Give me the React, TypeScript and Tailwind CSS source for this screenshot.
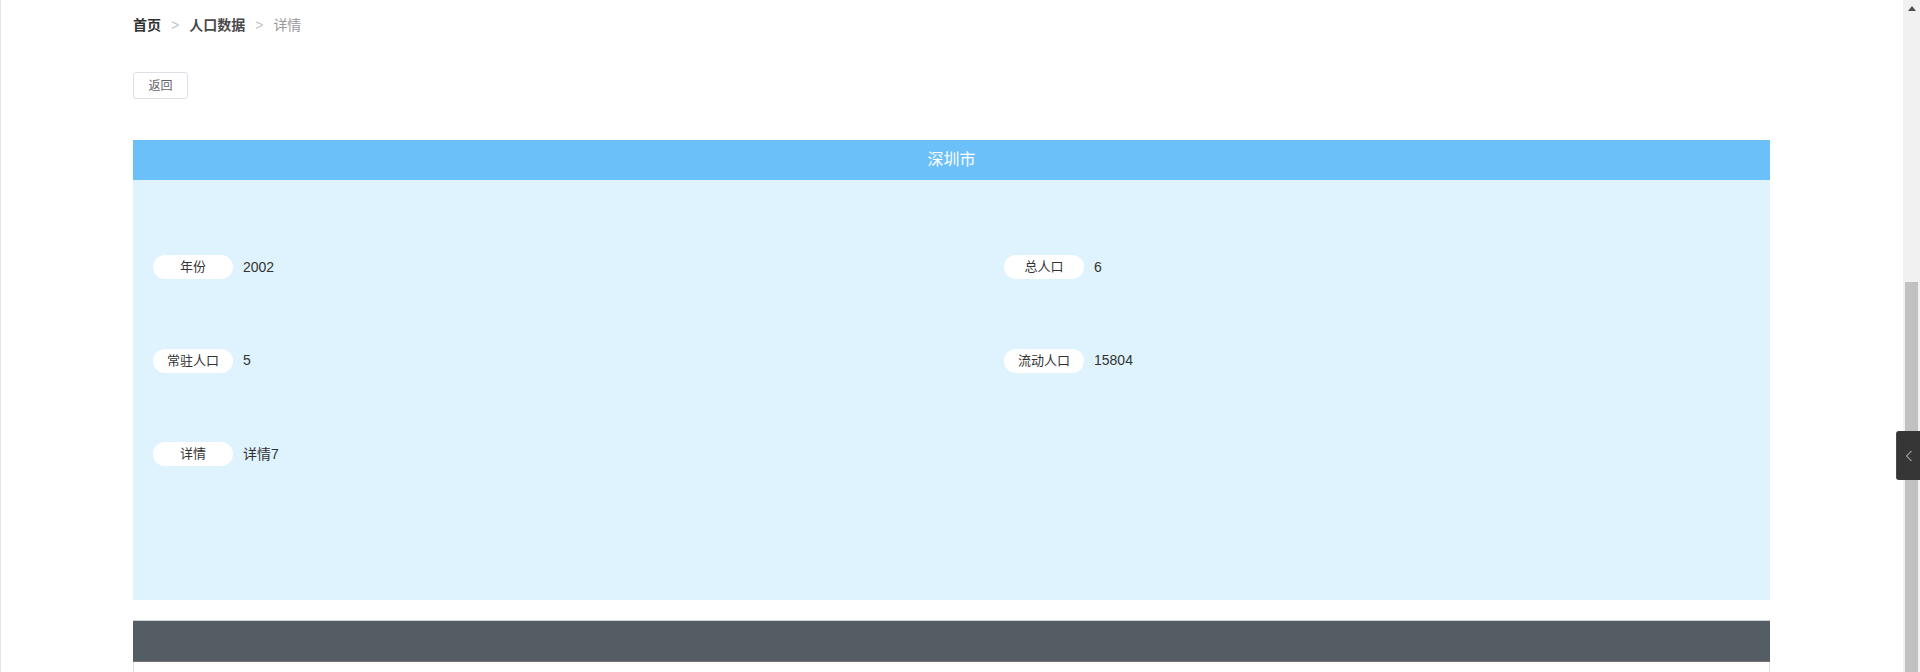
import React from 'react';

interface Field {
  label: string;
  value: string;
}

const rows: Field[][] = [
  [
    { label: '年份', value: '2002' },
    { label: '总人口', value: '6' },
  ],
  [
    { label: '常驻人口', value: '5' },
    { label: '流动人口', value: '15804' },
  ],
  [{ label: '详情', value: '详情7' }],
];

const font = "font-['Liberation_Sans','Noto_Sans_CJK_SC',sans-serif]";

const FieldItem: React.FC<{ field: Field }> = ({ field }) => (
  <div className="flex items-center">
    <span className="flex h-[24px] w-[80px] items-center justify-center rounded-full bg-white text-[13px] text-[#333]">
      {field.label}
    </span>
    <span className="ml-[10px] text-[14px] text-[#333]">{field.value}</span>
  </div>
);

const App: React.FC = () => {
  return (
    <div className={`relative flex h-[672px] w-[1920px] overflow-hidden bg-white ${font}`}>
      {/* Main content */}
      <main className="flex min-w-0 flex-1 flex-col border-l border-[#e4e4e4] pl-[132px] pr-[133px]">
        {/* Breadcrumb */}
        <nav className="flex h-[50px] items-center text-[14px]">
          <span className="font-bold text-[#303133]">首页</span>
          <span className="mx-[10px] text-[#c0c4cc]">&gt;</span>
          <span className="font-bold text-[#4a4a4a]">人口数据</span>
          <span className="mx-[10px] text-[#c0c4cc]">&gt;</span>
          <span className="text-[#97999c]">详情</span>
        </nav>

        <div className="mt-[22px]">
          <button className="flex h-[27px] w-[55px] items-center justify-center rounded-[3px] border border-[#dcdfe6] bg-white text-[12px] text-[#606266]">
            返回
          </button>
        </div>

        {/* Detail card */}
        <section className="mt-[41px]">
          <div className="flex h-[40px] items-center justify-center bg-[#6bc0fa] text-[16px] text-white">
            深圳市
          </div>
          <div className="h-[420px] bg-[#dff3fe] px-[20px] pt-[75px]">
            {rows.map((row, i) => (
              <div key={i} className="grid h-[93.5px] grid-cols-[851px_1fr] items-start">
                {row.map((f) => (
                  <FieldItem key={f.label} field={f} />
                ))}
              </div>
            ))}
          </div>
        </section>

        {/* Table header */}
        <section className="mt-[20px] flex flex-1 flex-col">
          <div className="h-[42px] border-t border-b border-t-[#cfd3d6] border-b-[#7c6f73] bg-[#545c64]" />
          <div className="flex-1 border-x border-[#dcdfe6] bg-white" />
        </section>
      </main>

      {/* Scrollbar */}
      <div className="flex w-[17px] flex-col bg-[#f1f1f1]">
        <div className="flex h-[17px] items-center justify-center">
          <svg width="8" height="5" viewBox="0 0 8 5">
            <path d="M0 5 L4 0 L8 5 Z" fill="#505050" />
          </svg>
        </div>
        <div className="h-[265px]" />
        <div className="mx-[2px] flex-1 bg-[#c1c1c1]" />
      </div>

      {/* Side toggle tab */}
      <div className="absolute right-0 top-[431px] flex h-[49px] w-[24px] items-center justify-center rounded-l-[3px] border-l border-[#4a4a4a] bg-[#363636]">
        <svg width="8" height="12" viewBox="0 0 8 12" fill="none">
          <path d="M6.5 1 L1.5 6 L6.5 11" stroke="#d8d8d8" strokeWidth="1" />
        </svg>
      </div>
    </div>
  );
};

export default App;
